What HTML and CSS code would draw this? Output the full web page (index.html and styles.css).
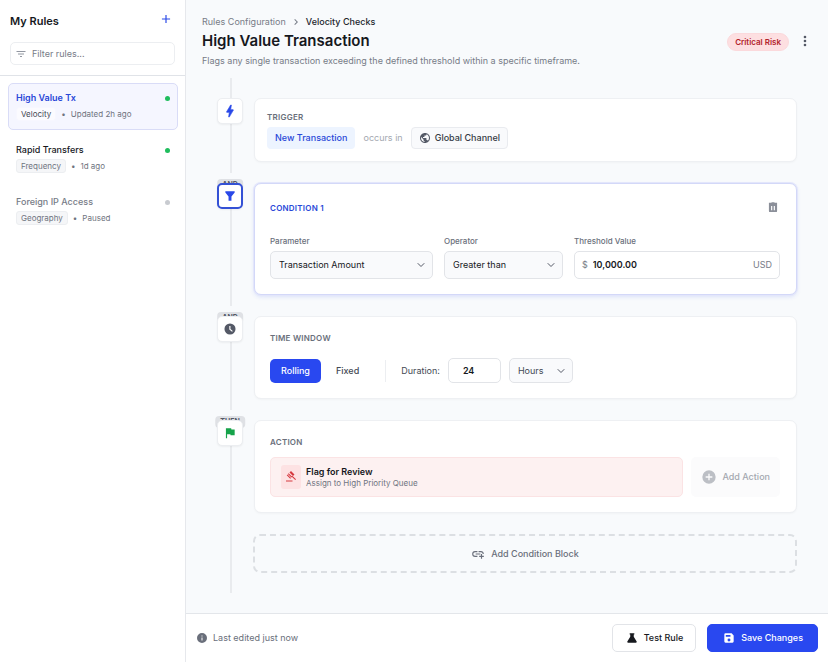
FILE: index.html
```html
<!DOCTYPE html>
<html lang="en">
<head>
<meta charset="utf-8">
<meta name="viewport" content="width=device-width, initial-scale=1">
<title>Rules Configuration</title>
<link rel="stylesheet" href="styles.css">
</head>
<body>
<svg class="sprite" aria-hidden="true">
  <symbol id="chevron" viewBox="0 0 10 10"><path d="M2 3.5 5 6.5 8 3.5" fill="none" stroke="currentColor" stroke-width="1" stroke-linecap="round" stroke-linejoin="round"/></symbol>
</svg>
<div class="app">
  <aside class="sidebar">
    <div class="sidebar-head">
      <div class="sidebar-title">
        <h2>My Rules</h2>
        <button class="icon-btn accent" aria-label="New rule"><svg class="i14" viewBox="0 0 24 24"><path d="M19 13h-6v6h-2v-6H5v-2h6V5h2v6h6z"/></svg></button>
      </div>
      <label class="filter">
        <svg class="i12" viewBox="0 0 24 24"><path d="M10 18h4v-2h-4v2zM3 6v2h18V6H3zm3 7h12v-2H6v2z"/></svg>
        <input type="text" placeholder="Filter rules..." aria-label="Filter rules">
      </label>
    </div>
    <nav class="rules">
      <a class="rule active" href="#">
        <span class="rule-top"><span>High Value Tx</span><i class="dot"></i></span>
        <span class="meta"><span class="tag">Velocity</span><b>•</b><span>Updated 2h ago</span></span>
      </a>
      <a class="rule" href="#">
        <span class="rule-top"><span>Rapid Transfers</span><i class="dot"></i></span>
        <span class="meta"><span class="tag">Frequency</span><b>•</b><span>1d ago</span></span>
      </a>
      <a class="rule paused" href="#">
        <span class="rule-top"><span>Foreign IP Access</span><i class="dot"></i></span>
        <span class="meta"><span class="tag">Geography</span><b>•</b><span>Paused</span></span>
      </a>
    </nav>
  </aside>

  <main class="main">
    <header class="head">
      <div class="head-text">
        <nav class="crumbs"><a href="#">Rules Configuration</a><svg class="i12" viewBox="0 0 24 24"><path d="M10 6 8.6 7.4l4.6 4.6-4.6 4.6L10 18l6-6z"/></svg><span>Velocity Checks</span></nav>
        <h1>High Value Transaction</h1>
        <p>Flags any single transaction exceeding the defined threshold within a specific timeframe.</p>
      </div>
      <div class="head-actions">
        <span class="risk">Critical Risk</span>
        <button class="icon-btn" aria-label="More options"><svg class="i16" viewBox="0 0 24 24"><path d="M12 8a2 2 0 1 0 0-4 2 2 0 0 0 0 4zm0 2a2 2 0 1 0 0 4 2 2 0 0 0 0-4zm0 6a2 2 0 1 0 0 4 2 2 0 0 0 0-4z"/></svg></button>
      </div>
    </header>

    <div class="timeline">
      <section class="step">
        <div class="rail"><span class="node"><svg class="i16" viewBox="0 0 24 24"><path d="M11 21h-1l1-7H7.500c-1.200 0-.6-1-.3-1.400C8.500 10.500 10.500 7.500 13 3h1l-1 7h3.500c.6 0 .8.400.4 1C13 17.500 11 21 11 21z" stroke="currentColor" stroke-width="1"/></svg></span></div>
        <div class="card trigger">
          <h3>Trigger</h3>
          <div class="trigger-row">
            <span class="pill blue">New Transaction</span>
            <span class="faint">occurs in</span>
            <span class="pill outline"><svg class="i12" viewBox="0 0 24 24"><path d="M12 2C6.480 2 2 6.480 2 12s4.480 10 10 10 10-4.480 10-10S17.520 2 12 2zm-1 17.930c-3.950-.49-7-3.850-7-7.930 0-.62.080-1.210.21-1.790L9 15v1c0 1.100.9 2 2 2v1.930zm6.900-2.540c-.26-.81-1-1.390-1.900-1.390h-1v-3c0-.55-.45-1-1-1H8v-2h2c.55 0 1-.45 1-1V7h2c1.100 0 2-.9 2-2v-.41c2.930 1.190 5 4.060 5 7.410 0 2.080-.8 3.970-2.100 5.390z"/></svg>Global Channel</span>
          </div>
        </div>
      </section>

      <section class="step">
        <div class="rail"><span class="joiner">AND</span><span class="node selected"><svg class="i14" viewBox="0 0 24 24"><path d="M4 4h16v2l-5.500 7v7h-5v-7L4 6z"/></svg></span></div>
        <div class="card selected">
          <div class="card-head">
            <h3>Condition 1</h3>
            <button class="icon-btn muted" aria-label="Delete condition"><svg class="i14" viewBox="0 0 24 24"><path fill-rule="evenodd" d="M5 3h4l1-1h4l1 1h4v3H5zM5 6h14v11a2 2 0 0 1-2 2H7a2 2 0 0 1-2-2zm3.700 2.500v7.500h2v-7.500zm4.600 0v7.500h2v-7.500z"/></svg></button>
          </div>
          <div class="fields">
            <div class="field">
              <label for="parameter">Parameter</label>
              <div class="select"><select id="parameter"><option>Transaction Amount</option></select><svg class="i10"><use href="#chevron"/></svg></div>
            </div>
            <div class="field">
              <label for="operator">Operator</label>
              <div class="select"><select id="operator"><option>Greater than</option></select><svg class="i10"><use href="#chevron"/></svg></div>
            </div>
            <div class="field">
              <label for="threshold">Threshold Value</label>
              <div class="amount"><span>$</span><input id="threshold" type="text" value="10,000.00"><span>USD</span></div>
            </div>
          </div>
        </div>
      </section>

      <section class="step">
        <div class="rail"><span class="joiner">AND</span><span class="node gray"><svg class="i14" viewBox="0 0 24 24"><path fill-rule="evenodd" d="M12 2.500a9.500 9.500 0 1 0 0 19 9.500 9.500 0 0 0 0-19zm-1.200 4.500h2v4.800l4 3.600-1.300 1.500-4.700-4.200z"/></svg></span></div>
        <div class="card">
          <h3>Time Window</h3>
          <div class="window-row">
            <div class="toggle"><button class="on">Rolling</button><button>Fixed</button></div>
            <span class="divider"></span>
            <label for="duration">Duration:</label>
            <input id="duration" class="duration" type="text" value="24">
            <div class="select unit"><select aria-label="Duration unit"><option>Hours</option></select><svg class="i10"><use href="#chevron"/></svg></div>
          </div>
        </div>
      </section>

      <section class="step">
        <div class="rail"><span class="joiner">THEN</span><span class="node green"><svg class="i14" viewBox="0 0 24 24"><path d="M14.400 6 14 4H5v17h2v-7h5.600l.4 2h7V6z"/></svg></span></div>
        <div class="card">
          <h3>Action</h3>
          <div class="action-row">
            <div class="action">
              <span class="action-icon"><svg class="i12" viewBox="0 0 24 24"><path d="M2 19h13v2H2zM10.500 1.500 12 0l7 7-1.500 1.500zM3.500 8.500 5 7l7 7-1.500 1.500zM5.800 6.200l1.500-1.500 7 7-1.500 1.500zM9 3l1.500-1.500 7 7L16 10zM13 11l1.500-1.500 7.500 7-1.500 1.500z"/></svg></span>
              <span class="action-text"><strong>Flag for Review</strong><small>Assign to High Priority Queue</small></span>
            </div>
            <button class="add-action"><svg class="i16" viewBox="0 0 24 24"><path d="M12 2a10 10 0 1 0 0 20 10 10 0 0 0 0-20zm5 11h-4v4h-2v-4H7v-2h4V7h2v4h4z"/></svg>Add Action</button>
          </div>
        </div>
      </section>

      <button class="add-block"><svg class="i14" viewBox="0 0 24 24"><path d="M8 11h8v2H8zm12.100 1H22c0-2.760-2.240-5-5-5h-4v1.900h4a3.100 3.100 0 0 1 3.100 3.100zM3.900 12A3.100 3.100 0 0 1 7 8.900h4V7H7a5 5 0 0 0 0 10h4v-1.900H7A3.100 3.100 0 0 1 3.900 12zM19 12h-2v3h-3v2h3v3h2v-3h3v-2h-3z"/></svg>Add Condition Block</button>
    </div>

    <footer class="foot">
      <span class="edited"><svg class="i12" viewBox="0 0 24 24"><path d="M12 2a10 10 0 1 0 0 20 10 10 0 0 0 0-20zm1 15h-2v-6h2zm0-8h-2V7h2z"/></svg>Last edited just now</span>
      <button class="btn"><svg class="i14" viewBox="0 0 24 24"><path d="M8 4h8v2h-1v4l5 8c.5 1-.2 2-1.200 2H5.200c-1 0-1.700-1-1.200-2l5-8V6H8z"/></svg>Test Rule</button>
      <button class="btn primary"><svg class="i14" viewBox="0 0 24 24"><path fill-rule="evenodd" d="M16.500 4H6a2 2 0 0 0-2 2v12a2 2 0 0 0 2 2h12a2 2 0 0 0 2-2V7.500zm-4.500 14a2.500 2.500 0 1 1 0-5 2.500 2.500 0 0 1 0 5zM6.500 7h8v3h-8z"/></svg>Save Changes</button>
    </footer>
  </main>
</div>
</body>
</html>
```

FILE: styles.css
```css
* { box-sizing: border-box; }
body { margin: 0; font-family: Inter, "Liberation Sans", sans-serif; font-size: 9px; line-height: 14px; color: #16181d; background: #f8fafc; }
h1, h2, h3, p { margin: 0; }
button, input, select { font: inherit; color: inherit; margin: 0; }
button { cursor: pointer; }
a { color: inherit; text-decoration: none; }
svg { fill: currentColor; flex: none; display: block; }
.sprite { display: none; }
.i10 { width: 10px; height: 10px; }
.i12 { width: 12px; height: 12px; }
.i14 { width: 14px; height: 14px; }
.i16 { width: 16px; height: 16px; }
.icon-btn { border: 0; background: none; padding: 0; color: #545966; }
.icon-btn.accent { color: #2948e8; }
.icon-btn.muted { color: #8b8f99; }

.app { display: grid; grid-template-columns: 186px 1fr; min-height: 100vh; }

.sidebar { background: #fff; border-right: 1px solid #e6e8ec; }
.sidebar-head { padding: 12px 10px 10px; border-bottom: 1px solid #e0e3e8; }
.sidebar-title { display: flex; justify-content: space-between; align-items: flex-start; height: 30px; }
.sidebar-title h2 { font-size: 11px; line-height: 18px; font-weight: 600; }
.sidebar-title .icon-btn { padding-right: 2px; }
.filter { display: flex; align-items: center; gap: 5px; height: 23px; padding: 0 4px; border: 1px solid #eceef1; border-radius: 5px; color: #9297a1; }
.filter input { flex: 1; min-width: 0; border: 0; outline: 0; background: none; padding: 0; }
.filter input::placeholder { color: #777c87; opacity: 1; }

.rules { display: flex; flex-direction: column; gap: 5px; padding: 7px 7px 7px 8px; }
.rule { display: flex; flex-direction: column; gap: 2px; padding: 7px 7px 8px; border: 1px solid transparent; border-radius: 5px; }
.rule.active { background: #f5f6ff; border-color: #d9dcf7; }
.rule-top { display: flex; justify-content: space-between; align-items: center; font-weight: 500; }
.rule.active .rule-top { color: #2948d8; font-weight: 600; }
.dot { width: 5px; height: 5px; border-radius: 50%; background: #1fbd5d; }
.meta { display: flex; align-items: center; gap: 5px; font-size: 8px; line-height: 12px; color: #6f7480; }
.meta b { font-weight: 400; }
.tag { padding: 0 4px; border: 1px solid #eceef1; border-radius: 3px; background: #f5f6f8; }
.active .tag { background: #fbfbff; border-color: #f7f7ff; color: #454a55; }
.paused .rule-top { color: #777c87; }
.paused .dot { background: #c8cbd0; }

.main { display: flex; flex-direction: column; min-width: 0; }
.head { display: flex; justify-content: space-between; align-items: center; padding: 15px 15px 0 16px; }
.crumbs { display: flex; align-items: center; gap: 4px; color: #777c87; }
.crumbs span { color: #23262d; font-weight: 500; }
h1 { font-size: 15px; line-height: 24px; font-weight: 600; }
.head p { line-height: 16px; color: #777c87; }
.head-actions { display: flex; align-items: flex-start; gap: 8px; }
.risk { padding: 1px 7px; border: 1px solid #fbd9dc; border-radius: 9px; background: #fddfe1; color: #b3242c; font-size: 8px; font-weight: 600; }

.timeline { position: relative; display: flex; flex-direction: column; gap: 21px; margin: 9px 31px 0; padding: 20px 0; }
.timeline::before { content: ""; position: absolute; left: 13px; top: 0; bottom: 0; width: 2px; background: #e9ebee; }
.step { display: flex; gap: 11px; }
.rail { position: relative; flex: none; width: 26px; }
.node { position: relative; display: grid; place-items: center; width: 26px; height: 26px; border: 1px solid #eceef1; border-radius: 5px; background: #fff; box-shadow: 0 1px 2px #0000000d; color: #2948e8; }
.node.selected { border: 2px solid #3451d5; }
.node.gray { color: #545966; }
.node.green { color: #16a34a; }
.joiner { position: absolute; top: -4px; left: 50%; transform: translateX(-50%); padding: 0 5px; border-radius: 4px; background: #dfe1e5; color: #545966; font-size: 7px; line-height: 12px; font-weight: 700; box-shadow: 0 0 0 6px #f8fafc; }

.card { flex: 1; min-width: 0; padding: 15px 16px 15px 15px; border: 1px solid #eef0f3; border-radius: 7px; background: #fff; box-shadow: 0 1px 2px #00000008; }
.card.trigger { padding: 12px; }
.card.selected { border-color: #d3d8f8; box-shadow: 0 0 0 1px #e3e6fb, 0 2px 4px #2948e822; }
h3 { font-size: 8px; line-height: 12px; font-weight: 600; text-transform: uppercase; color: #6a6f7b; letter-spacing: 0.03em; }
.selected h3 { color: #2948d8; }
.card-head { display: flex; justify-content: space-between; align-items: center; height: 18px; }
.trigger-row { display: flex; align-items: center; gap: 8px; margin-top: 4px; }
.pill { display: flex; align-items: center; gap: 4px; padding: 4px 8px; border-radius: 4px; font-weight: 500; }
.pill.blue { background: #edf4ff; color: #2948d8; }
.pill.outline { padding: 3px 7px; border: 1px solid #e9ebef; background: #f9fafc; color: #363a44; }
.pill svg { color: #545966; }
.faint { color: #a4a8b0; }

.fields { display: grid; grid-template-columns: 163fr 119fr 206fr; gap: 11px; margin-top: 18px; }
.field { min-width: 0; }
.field label { display: block; font-size: 8px; line-height: 12px; font-weight: 500; color: #6a6f7b; margin-bottom: 4px; }
.select { position: relative; }
.select select { appearance: none; width: 100%; height: 28px; padding: 0 24px 0 8px; border: 1px solid #e2e4e8; border-radius: 5px; background: #f9fafc; }
.select svg { position: absolute; right: 7px; top: 50%; transform: translateY(-50%); color: #545966; pointer-events: none; }
.amount { display: flex; align-items: center; gap: 5px; height: 28px; padding: 0 7px; border: 1px solid #e2e4e8; border-radius: 5px; color: #777c87; }
.amount input { flex: 1; min-width: 0; border: 0; padding: 0; background: none; outline: 0; color: #16181d; font-weight: 600; }

.window-row { display: flex; align-items: center; gap: 8px; margin-top: 14px; color: #444954; }
.toggle { display: flex; gap: 4px; }
.toggle button { height: 24px; padding: 0 11px; border: 0; border-radius: 5px; background: none; font-weight: 500; }
.toggle .on { background: #2948f0; color: #fff; }
.divider { width: 1px; height: 22px; margin: 0 7px; background: #eceef1; }
.duration { width: 53px; height: 25px; padding: 0 0 0 14px; border: 1px solid #e2e4e8; border-radius: 5px; background: #fff; color: #16181d; font-weight: 600; }
.unit { width: 64px; }
.unit select { height: 25px; }

.action-row { display: flex; gap: 8px; margin-top: 9px; }
.action { flex: 1; display: flex; align-items: center; gap: 5px; height: 40px; padding: 0 10px; border: 1px solid #fbe3e4; border-radius: 5px; background: #fdf1f1; }
.action-icon { display: grid; place-items: center; width: 20px; height: 24px; border-radius: 3px; background: #fde2e3; color: #d63a40; }
.action-text { display: flex; flex-direction: column; }
.action-text strong { line-height: 12px; font-weight: 600; }
.action-text small { font-size: 8px; line-height: 11px; color: #6f7480; }
.add-action { display: flex; align-items: center; gap: 5px; padding: 0 10px; border: 0; border-radius: 5px; background: #fbfbfc; color: #a4a8b0; font-weight: 500; }
.add-action svg { color: #bcbfc5; }
.add-block { display: flex; align-items: center; justify-content: center; gap: 6px; height: 39px; margin-left: 36px; border: 2px dashed #dcdfe3; border-radius: 7px; background: none; color: #6a6f7b; font-weight: 500; }

.foot { display: flex; align-items: center; gap: 11px; margin-top: auto; padding: 10px; border-top: 1px solid #e3e6ea; background: #fff; }
.edited { display: flex; align-items: center; gap: 5px; margin-right: auto; color: #6a6f7b; }
.btn { display: flex; align-items: center; gap: 5px; height: 28px; padding: 0 12px; border: 1px solid #e2e4e8; border-radius: 5px; background: #fff; font-weight: 500; }
.btn.primary { padding: 0 14px; border-color: #2948f0; background: #2948f0; color: #fff; }
```
